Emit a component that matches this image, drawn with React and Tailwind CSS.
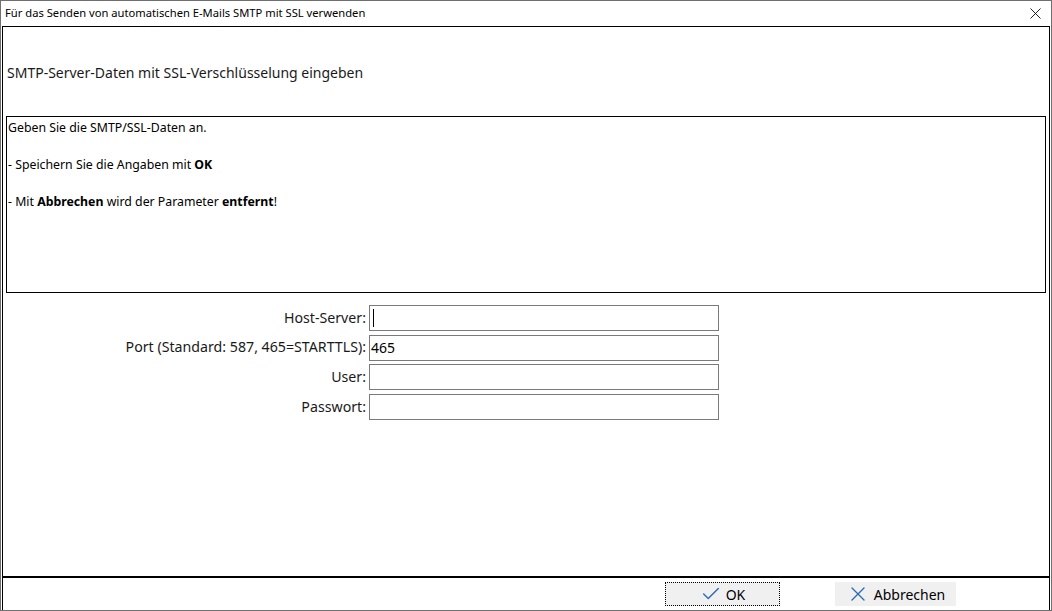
import { Check, X } from "lucide-react";

const font = { fontFamily: '"Noto Sans", "Open Sans", sans-serif' };

function Field({ label, value, caret }) {
  return (
    <div className="flex items-center h-[29.7px]">
      <label className="w-[366px] pr-[3px] text-right text-[14.2px] text-[#1a1a1a] leading-none">{label}</label>
      <div className="w-[350px] h-[26px] border border-[#7a7a7a] bg-white flex items-center px-[1px] text-[14px] text-black">
        {caret && <span className="w-[1px] h-[18px] bg-black ml-[2px]" />}
        {value}
      </div>
    </div>
  );
}

export default function App() {
  return (
    <div className="w-[1052px] h-[611px] bg-white border border-[#6f6f6f] flex flex-col overflow-hidden" style={font}>
      <div className="h-[25px] flex items-center justify-between pl-[4px] pr-[6px] text-[11.2px] text-black">
        <span>Für das Senden von automatischen E-Mails SMTP mit SSL verwenden</span>
        <X className="w-[19px] h-[19px] text-black" strokeWidth={1.1} />
      </div>
      <div className="flex-1 mx-[1px] border border-black border-b-2 flex flex-col">
        <div className="h-[89px] pt-[1px] flex items-center pl-[4px] text-[14px] text-[#1a1a1a]">
          SMTP-Server-Daten mit SSL-Verschlüsselung eingeben
        </div>
        <div className="mx-[3px] h-[177px] border border-black px-[1px] pt-[2px] text-[12.3px] text-black leading-[18px]">
          <p>Geben Sie die SMTP/SSL-Daten an.</p>
          <p className="mt-[19px]">- Speichern Sie die Angaben mit <b>OK</b></p>
          <p className="mt-[19px]">- Mit <b>Abbrechen</b> wird der Parameter <b>entfernt</b>!</p>
        </div>
        <div className="mt-[10px] flex flex-col">
          <Field label="Host-Server:" caret />
          <Field label="Port (Standard: 587, 465=STARTTLS):" value="465" />
          <Field label="User:" />
          <Field label="Passwort:" />
        </div>
      </div>
      <div className="h-[32px] flex items-center pl-[662px] mx-[1px] border-x border-black">
        <button className="w-[115px] h-[24px] bg-[#f0f0f0] border border-dotted border-black flex items-center justify-center gap-[4px] text-[14px] text-black">
          <Check className="w-[22px] h-[22px] text-[#2e6db4]" strokeWidth={1.6} />
          OK
        </button>
        <button className="ml-[55px] w-[121px] h-[24px] bg-[#f0f0f0] flex items-center justify-center gap-[4px] text-[14px] text-black">
          <X className="w-[24px] h-[24px] text-[#2e6db4]" strokeWidth={1.4} />
          Abbrechen
        </button>
      </div>
    </div>
  );
}
